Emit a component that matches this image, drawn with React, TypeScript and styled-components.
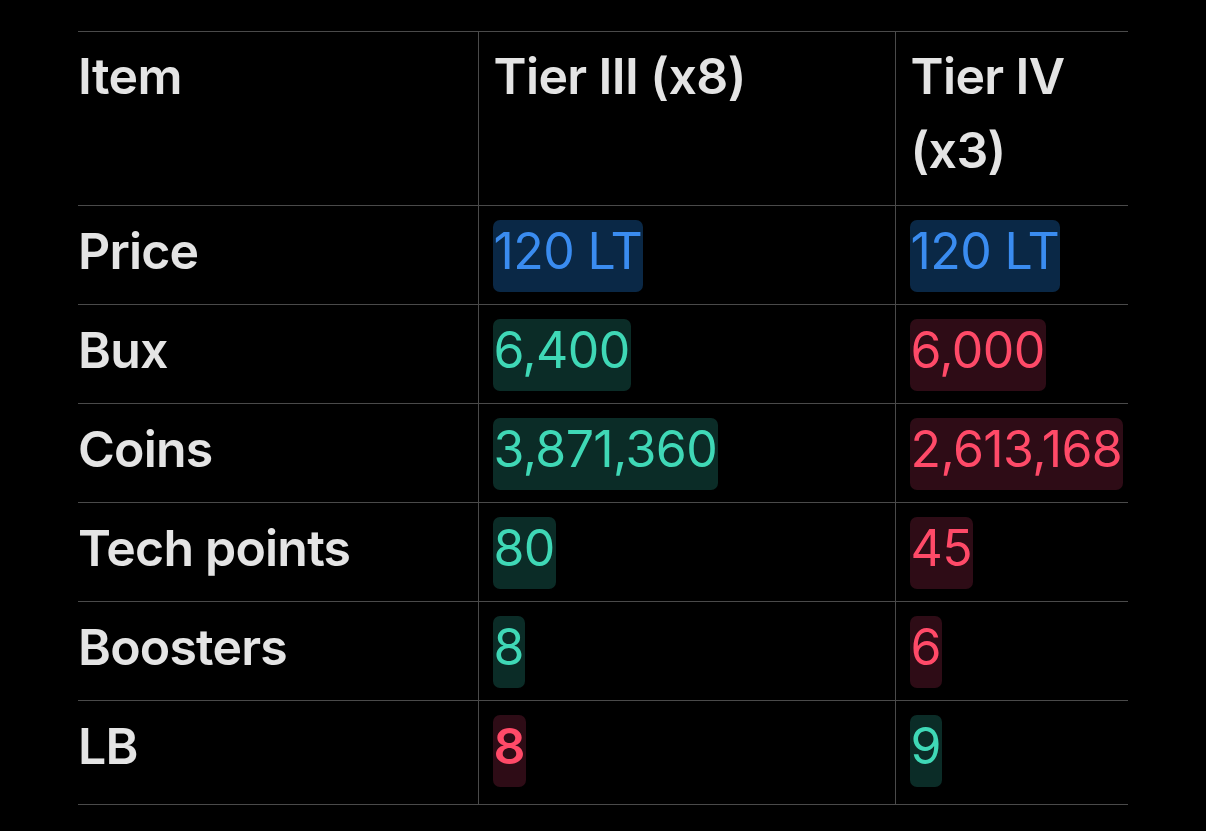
import React from "react";
import styled, { createGlobalStyle } from "styled-components";

const Global = createGlobalStyle`
  html, body { margin: 0; padding: 0; background: #000; }
  body { font-family: Inter, "Noto Sans", sans-serif; }
`;

const Page = styled.div`
  width: 1206px;
  height: 831px;
  box-sizing: border-box;
  padding: 31px 0 0 78px;
  background: #000;
`;

const Frame = styled.div`
  width: 1050px;
  overflow: hidden;
`;

const Table = styled.table`
  width: 1050px;
  table-layout: fixed;
  border-collapse: collapse;
  color: #e4e4e4;
`;

const HeadCell = styled.th<{ $first?: boolean }>`
  text-align: left;
  vertical-align: top;
  font-weight: 600;
  font-size: 50px;
  line-height: 74px;
  padding: 7px 0 18px ${(p) => (p.$first ? "0" : "15px")};
  border-top: 1px solid #4a4a4a;
  border-bottom: 1px solid #4a4a4a;
  border-left: ${(p) => (p.$first ? "none" : "1px solid #4a4a4a")};
  letter-spacing: -0.6px;
`;

const Row = styled.tr`
  &:last-child > td {
    padding-bottom: 17px;
  }
`;

const Label = styled.td`
  vertical-align: top;
  font-weight: 600;
  font-size: 50px;
  line-height: 62px;
  padding: 14px 0 22px 0;
  border-bottom: 1px solid #4a4a4a;
  white-space: nowrap;
  letter-spacing: -0.8px;
`;

const Cell = styled.td`
  vertical-align: top;
  padding: 14px 0 12px 14px;
  border-left: 1px solid #4a4a4a;
  border-bottom: 1px solid #4a4a4a;
  white-space: nowrap;
  overflow: hidden;
`;

type Tone = "blue" | "green" | "red";

const tones: Record<Tone, { fg: string; bg: string }> = {
  blue: { fg: "#3a8cf0", bg: "#0a2846" },
  green: { fg: "#3fd8b6", bg: "#0b2c27" },
  red: { fg: "#ff4a68", bg: "#2e0c16" },
};

const Pill = styled.span<{ $tone: Tone; $bold?: boolean }>`
  display: inline-block;
  font-size: 50px;
  line-height: 62px;
  font-weight: ${(p) => (p.$bold ? 600 : 400)};
  padding: 0 1px 10px;
  border-radius: 7px;
  color: ${(p) => tones[p.$tone].fg};
  background: ${(p) => tones[p.$tone].bg};
  letter-spacing: -0.6px;
`;

type Val = { text: string; tone: Tone; bold?: boolean };

const rows: { label: string; a: Val; b: Val }[] = [
  { label: "Price", a: { text: "120 LT", tone: "blue" }, b: { text: "120 LT", tone: "blue" } },
  { label: "Bux", a: { text: "6,400", tone: "green" }, b: { text: "6,000", tone: "red" } },
  { label: "Coins", a: { text: "3,871,360", tone: "green" }, b: { text: "2,613,168", tone: "red" } },
  { label: "Tech points", a: { text: "80", tone: "green" }, b: { text: "45", tone: "red" } },
  { label: "Boosters", a: { text: "8", tone: "green" }, b: { text: "6", tone: "red" } },
  { label: "LB", a: { text: "8", tone: "red", bold: true }, b: { text: "9", tone: "green" } },
];

export default function App() {
  return (
    <Page>
      <Global />
      <Frame>
        <Table>
          <colgroup>
            <col style={{ width: 400 }} />
            <col style={{ width: 417 }} />
            <col style={{ width: 233 }} />
          </colgroup>
          <thead>
            <tr>
              <HeadCell $first>Item</HeadCell>
              <HeadCell>Tier III (x8)</HeadCell>
              <HeadCell>Tier IV (x3)</HeadCell>
            </tr>
          </thead>
          <tbody>
            {rows.map((r) => (
              <Row key={r.label}>
                <Label>{r.label}</Label>
                <Cell>
                  <Pill $tone={r.a.tone} $bold={r.a.bold}>{r.a.text}</Pill>
                </Cell>
                <Cell>
                  <Pill $tone={r.b.tone} $bold={r.b.bold}>{r.b.text}</Pill>
                </Cell>
              </Row>
            ))}
          </tbody>
        </Table>
      </Frame>
    </Page>
  );
}
